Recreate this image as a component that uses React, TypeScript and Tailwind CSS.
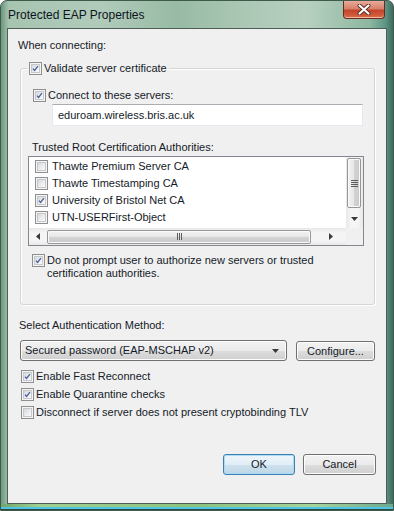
import React from "react";

const font = "font-['Liberation_Sans',Arial,sans-serif]";

function Check({ checked }: { checked?: boolean }) {
  return (
    <span className="flex h-[13px] w-[13px] shrink-0 border border-[#8e8f8f] bg-[#f4f4f4] p-[1px]">
      <span className="flex h-full w-full items-center justify-center border border-[#c5c8cc] bg-[linear-gradient(135deg,#d5d7d9_0%,#eeeff0_60%,#fafafa_100%)]">
        {checked && (
          <svg width="9" height="9" viewBox="0 0 9 9" aria-hidden>
            <path
              d="M1.3 4.6 L3.4 7 L7.6 1.4"
              fill="none"
              stroke="#4a5f9e"
              strokeWidth="1.7"
              strokeLinejoin="round"
            />
          </svg>
        )}
      </span>
    </span>
  );
}

function CheckRow({ checked, label }: { checked?: boolean; label: string }) {
  return (
    <div className="flex h-[18px] items-center gap-[2px] pl-[13px]">
      <Check checked={checked} />
      <span>{label}</span>
    </div>
  );
}

function Button({ children, focused, className }: { children: React.ReactNode; focused?: boolean; className: string }) {
  return (
    <button
      type="button"
      className={`flex items-center justify-center rounded-[3px] border ${
        focused
          ? "border-[#3c7fb1] bg-[linear-gradient(180deg,#edf5fa_0%,#e1eef7_50%,#cfe2ee_51%,#bdd6e6_100%)] shadow-[inset_0_0_0_1px_#a9dcf5]"
          : "border-[#707070] bg-[linear-gradient(180deg,#f2f2f2_0%,#ebebeb_50%,#dddddd_51%,#cfcfcf_100%)] shadow-[inset_0_0_0_1px_#fcfcfc]"
      } ${className}`}
    >
      {children}
    </button>
  );
}

const certs = [
  { name: "Thawte Premium Server CA", checked: false },
  { name: "Thawte Timestamping CA", checked: false },
  { name: "University of Bristol Net CA", checked: true },
  { name: "UTN-USERFirst-Object", checked: false },
];

function Arrow({ dir }: { dir: "down" | "left" | "right" }) {
  const d =
    dir === "down" ? "M0 0 H7 L3.5 4 Z" : dir === "left" ? "M4 0 V7 L0 3.5 Z" : "M0 0 V7 L4 3.5 Z";
  const w = dir === "down" ? 7 : 4;
  const h = dir === "down" ? 4 : 7;
  return (
    <svg width={w} height={h} viewBox={`0 0 ${w} ${h}`} aria-hidden>
      <path d={d} fill="#3a3a3a" />
    </svg>
  );
}

function CertList() {
  return (
    <div className="ml-[7px] mt-[1px] flex h-[90px] w-[336px] flex-col border border-[#828790] bg-white">
      <div className="flex min-h-0 flex-1">
        <div className="flex-1 pt-[1px]">
          {certs.map((c) => (
            <div key={c.name} className="flex h-[17px] items-center gap-[4px] pl-[6px]">
              <Check checked={c.checked} />
              <span className="whitespace-nowrap">{c.name}</span>
            </div>
          ))}
        </div>
        <div className="flex w-[17px] flex-col bg-[linear-gradient(90deg,#e8e8e8,#f5f5f5_30%,#f5f5f5_70%,#e8e8e8)]">
          <div className="mx-[1px] mt-[1px] flex h-[50px] w-[14px] items-center justify-center rounded-[2px] border border-[#979797] bg-[linear-gradient(90deg,#f3f3f3_0%,#e6e6e6_50%,#d4d4d4_51%,#c9c9c9_100%)] shadow-[inset_0_0_0_1px_#fafafa]">
            <div className="flex flex-col gap-[1px]">
              <span className="h-[1px] w-[7px] bg-[#5c5c5c]" />
              <span className="h-[1px] w-[7px] bg-[#5c5c5c]" />
              <span className="h-[1px] w-[7px] bg-[#5c5c5c]" />
              <span className="h-[1px] w-[7px] bg-[#5c5c5c]" />
            </div>
          </div>
          <div className="flex flex-1 items-center justify-center pt-[2px]">
            <Arrow dir="down" />
          </div>
        </div>
      </div>
      <div className="flex h-[17px]">
        <div className="flex flex-1 items-center bg-[linear-gradient(180deg,#e8e8e8,#f5f5f5_30%,#f5f5f5_70%,#e8e8e8)]">
          <div className="flex w-[18px] justify-center">
            <Arrow dir="left" />
          </div>
          <div className="flex h-[14px] w-[264px] items-center justify-center rounded-[2px] border border-[#979797] bg-[linear-gradient(180deg,#f3f3f3_0%,#e6e6e6_50%,#d4d4d4_51%,#c9c9c9_100%)] shadow-[inset_0_0_0_1px_#fafafa]">
            <div className="flex gap-[1px]">
              <span className="h-[7px] w-[1px] bg-[#5c5c5c]" />
              <span className="h-[7px] w-[1px] bg-[#5c5c5c]" />
              <span className="h-[7px] w-[1px] bg-[#5c5c5c]" />
            </div>
          </div>
          <div className="flex flex-1 justify-center pl-[4px]">
            <Arrow dir="right" />
          </div>
        </div>
        <div className="w-[17px] bg-[#f0f0f0]" />
      </div>
    </div>
  );
}

export default function App() {
  return (
    <div
      className={`${font} flex h-[511px] w-[394px] flex-col overflow-hidden rounded-t-[7px] border border-[#3f5a4a] bg-[linear-gradient(90deg,#6c977f_0%,#a7c4b1_2%,#b1cbba_25%,#98bba5_45%,#a9c6b3_60%,#b8d0c0_78%,#8db7a1_94%,#5f9687_98%,#3e6a5e_100%)] text-[11px] text-[#141a28]`}
    >
      <div className="flex h-[27px] shrink-0 items-start justify-between pl-[7px] pr-[8px]">
        <span className="pt-[5px] text-[12px] text-[#0c1420]">Protected EAP Properties</span>
        <div className="flex h-[18px] w-[42px] items-center justify-center rounded-b-[4px] border border-t-0 border-[#6a2a1f] bg-[linear-gradient(180deg,#e8ab9d_0%,#d9806c_45%,#c2452b_55%,#d4603f_90%,#e38a6c_100%)] shadow-[inset_0_-1px_0_#f0b8a0]">
          <svg width="14" height="11" viewBox="0 0 14 11" aria-hidden>
            <path d="M2.5 1.5 L11.5 9.5 M11.5 1.5 L2.5 9.5" stroke="#5a2a22" strokeWidth="4" strokeLinecap="round" />
            <path d="M2.5 1.5 L11.5 9.5 M11.5 1.5 L2.5 9.5" stroke="#ffffff" strokeWidth="2.2" strokeLinecap="round" />
          </svg>
        </div>
      </div>

      <div className="ml-[6px] flex h-[476px] w-[380px] shrink-0 flex-col border border-[#4d5e55] bg-[#f0f0f0]">
        <div className="mt-[8px] h-[16px] pl-[10px] leading-[16px]">When connecting:</div>

        <div className="relative ml-[12px] mt-[15px] flex h-[237px] w-[355px] flex-col rounded-[3px] border border-[#d5d5d5] shadow-[inset_1px_1px_0_#ffffff,1px_1px_0_#ffffff]">
          <div className="absolute -top-[8px] left-[6px] flex h-[14px] items-center gap-[2px] bg-[#f0f0f0] px-[2px]">
            <Check checked />
            <span>Validate server certificate</span>
          </div>

          <div className="mt-[19px] flex h-[14px] items-center gap-[2px] pl-[12px]">
            <Check checked />
            <span>Connect to these servers:</span>
          </div>

          <div className="ml-[31px] mt-[2px] flex h-[22px] w-[311px] items-center border border-[#e3e9ef] border-t-[#abadb3] bg-white pl-[5px]">
            eduroam.wireless.bris.ac.uk
          </div>

          <div className="mt-[13px] h-[16px] pl-[11px] leading-[16px]">Trusted Root Certification Authorities:</div>

          <CertList />

          <div className="mt-[8px] flex items-start gap-[2px] pl-[11px]">
            <Check checked />
            <span className="leading-[13px]">
              Do not prompt user to authorize new servers or trusted
              <br />
              certification authorities.
            </span>
          </div>
        </div>

        <div className="mt-[12px] h-[16px] pl-[11px] leading-[16px]">Select Authentication Method:</div>

        <div className="mt-[7px] flex items-start">
          <div className="ml-[12px] flex h-[21px] w-[267px] items-center justify-between rounded-[3px] border border-[#707070] bg-[linear-gradient(180deg,#f2f2f2_0%,#ebebeb_50%,#dddddd_51%,#cfcfcf_100%)] pl-[4px] pr-[7px] shadow-[inset_0_0_0_1px_#fcfcfc]">
            <span>Secured password (EAP-MSCHAP v2)</span>
            <Arrow dir="down" />
          </div>
          <Button className="ml-[9px] mt-[1px] h-[20px] w-[79px]">Configure...</Button>
        </div>

        <div className="mt-[6px] flex flex-col">
          <CheckRow checked label="Enable Fast Reconnect" />
          <CheckRow checked label="Enable Quarantine checks" />
          <CheckRow label="Disconnect if server does not present cryptobinding TLV" />
        </div>

        <div className="mt-[33px] flex justify-end gap-[8px] pr-[10px]">
          <Button focused className="h-[21px] w-[72px]">
            OK
          </Button>
          <Button className="h-[21px] w-[73px]">Cancel</Button>
        </div>
      </div>

      <div className="flex flex-1 flex-col bg-[linear-gradient(90deg,#6fa86a,#9fd08f_10%,#8cc27c_50%,#a6d49a_80%,#6aa88e)]">
        <div className="flex-1" />
        <div className="h-[2px] bg-[#4fc4e6]" />
        <div className="h-[1px] bg-[#2b4a3c]" />
      </div>
    </div>
  );
}
